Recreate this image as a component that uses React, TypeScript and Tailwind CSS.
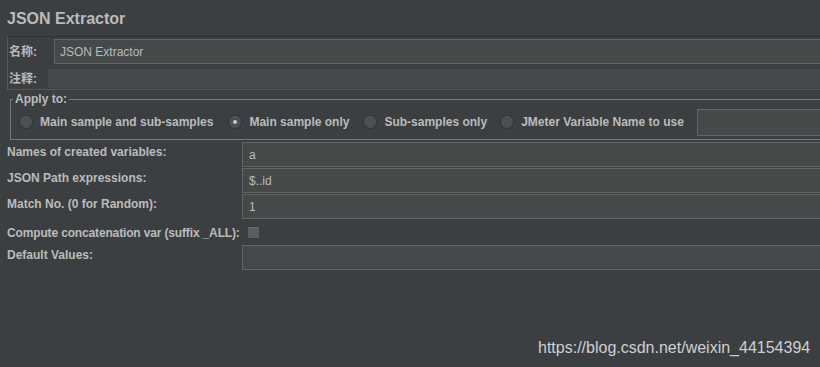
import React from "react";

const font = { fontFamily: '"Liberation Sans", Arial, "Noto Sans CJK SC", sans-serif' };

function Radio({ checked, label }: { checked?: boolean; label: string }) {
  return (
    <div className="flex items-center">
      <div className="w-[14px] h-[14px] rounded-full bg-[#4c5052] border border-[#2f3133] shadow-[inset_0_1px_0_#5a5e60] flex items-center justify-center">
        {checked && <div className="w-[4px] h-[4px] rounded-full bg-[#c8c8c8]" />}
      </div>
      <span className="ml-[7px] text-[12px] font-bold text-[#bbbbbb] whitespace-nowrap">{label}</span>
    </div>
  );
}

function Row({ label, value, checkbox, tight }: { label: string; value?: string; checkbox?: boolean; tight?: boolean }) {
  return (
    <div className={"flex " + (checkbox ? "h-[25px] items-center" : "h-[26px] items-start")}>
      <div
        className={
          "w-[242px] pl-[7px] text-[12px] leading-[16px] font-bold text-[#bbbbbb] whitespace-nowrap shrink-0 " +
          (tight ? "tracking-[-0.15px]" : "pt-[2px]")
        }
      >
        {label}
      </div>
      {checkbox ? (
        <div className="ml-[5px] w-[13px] h-[13px] bg-[#5b5e60] border border-[#3a3c3e] rounded-[1px] shadow-[inset_0_1px_0_#67696b]" />
      ) : (
        <div className="flex-1 h-[25px] bg-[#45494a] border border-[#646464] flex items-center pl-[6px] text-[12px] text-[#bbbbbb]">
          {value}
        </div>
      )}
    </div>
  );
}

export default function App() {
  return (
    <div className="relative w-[820px] h-[367px] bg-[#3c3f41] overflow-hidden" style={font}>
      <div className="w-[840px]">
        <div className="h-[36px] pl-[7px] pt-[9px] text-[16px] font-bold text-[#bbbbbb] leading-[20px]">JSON Extractor</div>
        <div className="ml-[7px] border border-[#555859] border-t-[#2e3031] pt-[2px] pb-[1px]">
          <div className="flex items-center h-[25px]">
            <span className="w-[46px] pl-[1px] text-[12px] font-bold text-[#bbbbbb] shrink-0">名称:</span>
            <div className="flex-1 h-[25px] bg-[#45494a] border border-[#646464] flex items-center pl-[5px] text-[12px] text-[#bbbbbb]">
              JSON Extractor
            </div>
          </div>
          <div className="flex items-center h-[19px] mt-[5px]">
            <span className="w-[40px] pl-[1px] text-[12px] font-bold text-[#bbbbbb] shrink-0">注释:</span>
            <div className="flex-1 h-[19px] bg-[#45494a]" />
          </div>
        </div>
        <fieldset className="ml-[10px] mt-[3px] border border-[#77797a] h-[47px] px-[8px]">
          <legend className="px-[2px] ml-[-6px] text-[12px] font-bold text-[#bbbbbb] leading-[12px]">Apply to:</legend>
          <div className="flex items-center h-[34px]">
            <Radio label="Main sample and sub-samples" />
            <div className="ml-[15px]"><Radio checked label="Main sample only" /></div>
            <div className="ml-[14px]"><Radio label="Sub-samples only" /></div>
            <div className="ml-[13px]"><Radio label="JMeter Variable Name to use" /></div>
            <div className="ml-[13px] flex-1 h-[27px] bg-[#45494a] border border-[#646464]" />
          </div>
        </fieldset>
        <div className="mt-[2px] flex flex-col">
          <Row label="Names of created variables:" value="a" />
          <Row label="JSON Path expressions:" value="$..id" />
          <Row label="Match No. (0 for Random):" value="1" />
          <Row label="Compute concatenation var (suffix _ALL):" checkbox tight />
          <Row label="Default Values:" value="" />
        </div>
      </div>
      <div className="absolute left-[538px] top-[336px] text-[16px] text-[#cfcfcf]" style={font}>
        https://blog.csdn.net/weixin_44154394
      </div>
    </div>
  );
}
